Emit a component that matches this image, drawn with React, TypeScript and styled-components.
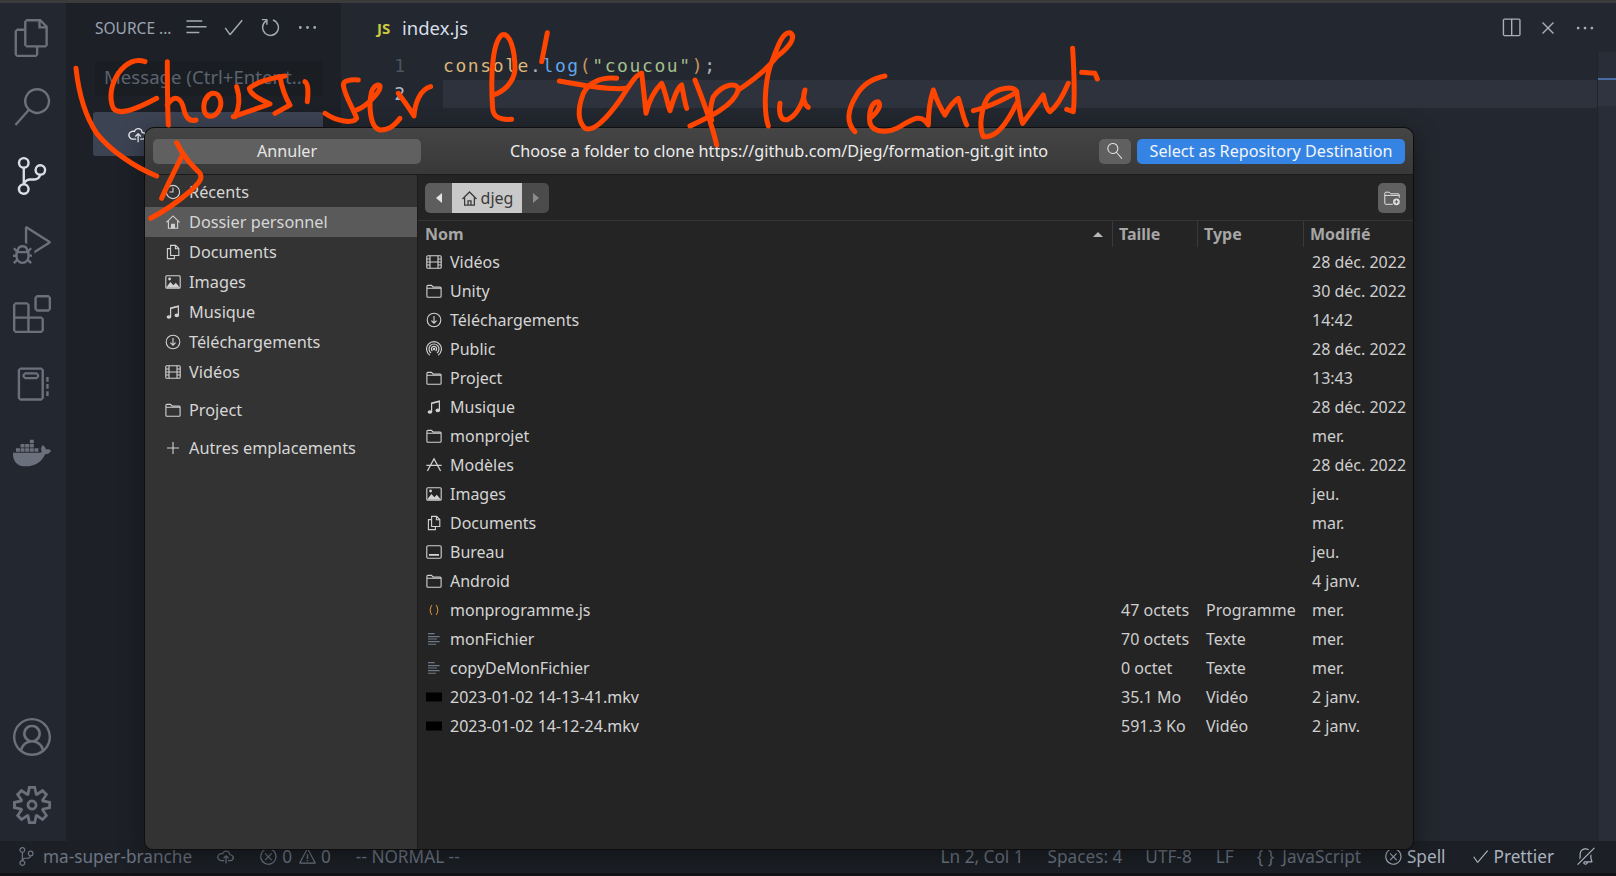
import * as React from 'react';
import styled, { createGlobalStyle } from 'styled-components';
import {
  VscFiles, VscSearch, VscSourceControl, VscDebugAlt, VscExtensions, VscNotebook, VscAccount,
  VscSettingsGear, VscListSelection, VscCheck, VscRefresh, VscEllipsis, VscSplitHorizontal,
  VscClose, VscCloudUpload, VscError, VscWarning, VscBellSlash,
} from 'react-icons/vsc';
import { FaDocker } from 'react-icons/fa';

const GlobalStyle = createGlobalStyle`
  html, body { margin: 0; padding: 0; background: #1c2026; overflow: hidden; }
  body { font-family: "Noto Sans", "Liberation Sans", sans-serif; }
`;

const Page = styled.div`
  position: relative;
  width: 1616px;
  height: 876px;
  display: flex;
  flex-direction: column;
  overflow: hidden;
`;

const TopStrip = styled.div`
  height: 3px;
  background: #3b3b3b;
`;

const Main = styled.div`
  flex: 1;
  display: flex;
  min-height: 0;
`;

const ActivityBar = styled.nav`
  width: 66px;
  box-sizing: border-box;
  padding: 0 3px 2px 0;
  background: #23272f;
  display: flex;
  flex-direction: column;
  justify-content: space-between;
`;

const ActivityGroup = styled.div`
  display: flex;
  flex-direction: column;
`;

const ActivityItem = styled.div<{ $active?: boolean; $h?: number }>`
  height: ${p => p.$h ?? 69.2}px;
  display: flex;
  align-items: center;
  justify-content: center;
  color: ${p => (p.$active ? '#d8dee9' : '#6b717c')};
  font-size: 38px;
`;

const SideBar = styled.aside`
  width: 275px;
  background: #1d2127;
  display: flex;
  flex-direction: column;
`;

const SideHeader = styled.div`
  height: 49px;
  display: flex;
  align-items: center;
  padding-left: 29px;
  color: #9aa3b2;
  font-size: 15.5px;
`;

const SideTitle = styled.span`
  width: 83px;
`;

const SideAction = styled.span`
  width: 37px;
  display: flex;
  justify-content: center;
  font-size: 23px;
  color: #a3aab6;
`;

const MessageBox = styled.div`
  margin: 9px 19px 0 29px;
  height: 35px;
  box-sizing: border-box;
  background: #1a1d22;
  padding: 0 0 4px 9px;
  display: flex;
  align-items: center;
  color: #5c6370;
  font-size: 18.6px;
  white-space: nowrap;
`;

const PublishButton = styled.div`
  margin: 16px 18px 0 27px;
  height: 44px;
  border-radius: 3px;
  background: #3c4353;
  color: #eceff4;
  display: flex;
  align-items: center;
  padding-left: 34px;
  font-size: 21px;
`;

const Editor = styled.main`
  flex: 1;
  background: #23272f;
  display: flex;
  flex-direction: column;
  min-width: 0;
`;

const TabBar = styled.div`
  height: 49px;
  display: flex;
  align-items: center;
  padding: 0 13px 0 36px;
`;

const JsBadge = styled.span`
  color: #cbcb41;
  font-size: 15px;
  font-weight: 700;
  width: 25px;
`;

const TabName = styled.span`
  color: #d8dee9;
  font-size: 18.5px;
  flex: 1;
`;

const TabAction = styled.span`
  width: 37px;
  display: flex;
  justify-content: center;
  color: #a9b0bc;
  font-size: 22px;
`;

const EditorBody = styled.div`
  flex: 1;
  display: flex;
  min-height: 0;
`;

const CodeArea = styled.div`
  flex: 1;
`;

const Line = styled.div`
  height: 28px;
  display: flex;
  align-items: center;
  font-family: "DejaVu Sans Mono", "Liberation Mono", monospace;
  font-size: 18px;
  letter-spacing: 1.6px;
  white-space: pre;
`;

const LineNumber = styled.span<{ $current?: boolean }>`
  width: 64px;
  padding: 0 38px 2px 0;
  text-align: right;
  letter-spacing: 0;
  color: ${p => (p.$current ? '#aeb6c4' : '#4c5361')};
`;

const Content = styled.span<{ $current?: boolean }>`
  flex: 1;
  height: 100%;
  box-sizing: border-box;
  padding-bottom: 2px;
  display: flex;
  align-items: center;
  background: ${p => (p.$current ? '#2d323d' : 'transparent')};
`;

const Tok = styled.span<{ $c: string }>`
  color: ${p => p.$c};
`;

const Minimap = styled.div`
  width: 18px;
  background: #292d37;
  border-left: 1px solid #1f232a;
  display: flex;
  flex-direction: column;
`;

const MinimapBand = styled.div`
  margin-top: 26px;
  height: 28px;
  background: #2f3440;
  border-top: 2px solid #4a6ba3;
  box-sizing: border-box;
`;

const StatusBar = styled.footer`
  height: 32px;
  box-sizing: border-box;
  padding: 0 21px 2px 17px;
  background: #1c2026;
  display: flex;
  align-items: center;
  color: #6c7583;
  font-size: 17.2px;
  white-space: nowrap;
`;

const BottomLine = styled.div`
  height: 3px;
  background: #111317;
`;

const StatusItem = styled.span<{ $gap?: number; $bright?: boolean; $iconGap?: number }>`
  display: inline-flex;
  align-items: center;
  gap: ${p => p.$iconGap ?? 4}px;
  margin-left: ${p => p.$gap ?? 0}px;
  color: ${p => (p.$bright ? '#aab2bf' : 'inherit')};
  svg { font-size: 19px; }
`;

const StatusSpacer = styled.span`
  flex: 1;
`;

/* file chooser */
const Dialog = styled.section`
  position: absolute;
  left: 145px;
  top: 128px;
  width: 1268px;
  height: 721px;
  display: flex;
  flex-direction: column;
  border-radius: 9px 9px 8px 8px;
  overflow: hidden;
  background: #242424;
  box-shadow: 0 0 0 1px #0e0e0e, 0 6px 26px rgba(0, 0, 0, 0.45);
  color: #d4d4d4;
  font-size: 16px;
`;

const DialogHeader = styled.header`
  height: 46px;
  flex-shrink: 0;
  display: grid;
  grid-template-columns: 1fr auto 1fr;
  align-items: center;
  padding: 0 8px;
  background: linear-gradient(#454545, #383838);
  border-bottom: 1px solid #1b1b1b;
`;

const HeaderButton = styled.button<{ $w?: number; $primary?: boolean }>`
  height: 25px;
  width: ${p => (p.$w ? `${p.$w}px` : 'auto')};
  border: none;
  border-radius: 5px;
  padding: 0;
  font: inherit;
  font-size: 16.15px;
  color: ${p => (p.$primary ? '#f2f6fb' : '#e6e6e6')};
  background: ${p => (p.$primary ? '#3584e4' : '#606060')};
  display: flex;
  align-items: center;
  justify-content: center;
`;

const SearchGlyph = styled(VscSearch)`
  color: #e6e6e6;
  transform: scaleX(-1);
`;

const DialogTitle = styled.div`
  color: #ececec;
  font-size: 16.2px;
  white-space: nowrap;
`;

const HeaderRight = styled.div`
  justify-self: end;
  display: flex;
  gap: 6px;
`;

const DialogBody = styled.div`
  flex: 1;
  display: flex;
  min-height: 0;
`;

const Places = styled.div`
  width: 272px;
  flex-shrink: 0;
  background: #333333;
  border-right: 1px solid #1c1c1c;
  padding-top: 2px;
  font-size: 16.3px;
`;

const Place = styled.div<{ $selected?: boolean; $sep?: boolean }>`
  height: 30px;
  margin-top: ${p => (p.$sep ? 8 : 0)}px;
  display: flex;
  align-items: center;
  gap: 8px;
  padding-left: 20px;
  background: ${p => (p.$selected ? '#5a5a5a' : 'transparent')};
  color: #d6d6d6;
`;

const FilePane = styled.div`
  flex: 1;
  min-width: 0;
  display: flex;
  flex-direction: column;
`;

const PathRow = styled.div`
  height: 46px;
  flex-shrink: 0;
  box-sizing: border-box;
  padding: 8px 7px 7px;
  display: flex;
  justify-content: space-between;
  border-bottom: 1px solid #353535;
`;

const PathBar = styled.div`
  display: flex;
  border-radius: 5px;
  overflow: hidden;
`;

const PathArrow = styled.div<{ $dim?: boolean }>`
  width: 27px;
  display: flex;
  align-items: center;
  justify-content: center;
  background: ${p => (p.$dim ? '#4b4b4b' : '#5d5d5d')};
  color: ${p => (p.$dim ? '#8c8c8c' : '#e4e4e4')};
`;

const PathCrumb = styled.div`
  width: 70px;
  display: flex;
  align-items: center;
  justify-content: center;
  gap: 3px;
  background: #c9c9c9;
  color: #3a3a3a;
`;

const NewFolderButton = styled.div`
  width: 28px;
  border-radius: 5px;
  background: #606060;
  display: flex;
  align-items: center;
  justify-content: center;
`;

const FileGrid = styled.div`
  display: grid;
  grid-template-columns: 694px 85px 106px 1fr;
  grid-template-rows: 26px;
  grid-auto-rows: 29px;
  align-items: center;
`;

const ColumnHead = styled.div<{ $first?: boolean }>`
  height: 100%;
  display: flex;
  align-items: center;
  justify-content: space-between;
  box-sizing: border-box;
  padding: 0 7px;
  color: #a6a6a6;
  font-weight: 700;
  ${p => !p.$first && 'box-shadow: inset 1px 0 0 #3a3a3a;'}
`;

const SortArrow = styled.span`
  width: 0;
  height: 0;
  border-left: 5px solid transparent;
  border-right: 5px solid transparent;
  border-bottom: 5px solid #b8b8b8;
  margin-right: 2px;
`;

const NameCell = styled.div`
  display: flex;
  align-items: center;
  gap: 8px;
  padding-left: 8px;
  color: #d4d4d4;
`;

const Cell = styled.div`
  padding-left: 9px;
  color: #cfcfcf;
  white-space: nowrap;
`;

const IconSvg = styled.svg`
  flex-shrink: 0;
`;

const Annotation = styled.svg`
  position: absolute;
  left: 0;
  top: 0;
  pointer-events: none;
`;

type IconName =
  | 'clock' | 'home' | 'docs' | 'image' | 'music' | 'download' | 'film' | 'folder' | 'plus'
  | 'public' | 'templates' | 'desktop' | 'code' | 'text' | 'video';

const GtkIcon = ({ name }: { name: IconName }) => {
  const line = { fill: 'none', stroke: '#d2d2d2', strokeWidth: 1.1 };
  let body: React.ReactNode = null;
  switch (name) {
    case 'clock':
      body = <g {...line}><circle cx="8" cy="8" r="6.6" /><path d="M8 3.6V8H4.4" /></g>;
      break;
    case 'home':
      body = <g {...line}><path d="M1.4 8.4 8 1.9l6.6 6.5M3.4 7v7.3h9.2V7" /><path d="M6.6 14.3v-4h2.8v4" fill="#d2d2d2" /></g>;
      break;
    case 'docs':
      body = <g {...line}><path d="M5.6 4.6H2.4v10h7v-3" /><path d="M5.6 1.4h5l3.2 3.2v6.9H5.6zM10.4 1.4v3.4h3.4" /></g>;
      break;
    case 'image':
      body = (
        <g>
          <rect x="0.8" y="1.8" width="14.4" height="12.4" rx="1" fill="none" stroke="#d2d2d2" strokeWidth="1.1" />
          <path d="M1 13.8 5.4 8l3 3.2 2.4-2.4 4.2 5z" fill="#d2d2d2" />
          <circle cx="4.6" cy="5" r="1.4" fill="#d2d2d2" />
        </g>
      );
      break;
    case 'music':
      body = (
        <g fill="#d2d2d2">
          <path d="M5 3.4 14 1.2v1.9L6.2 5v8H5zM12.8 2h1.2v9.4h-1.2z" />
          <ellipse cx="3.9" cy="13" rx="2.3" ry="1.8" />
          <ellipse cx="11.8" cy="11.4" rx="2.3" ry="1.8" />
        </g>
      );
      break;
    case 'download':
      body = <g {...line}><circle cx="8" cy="8" r="6.8" /><path d="M8 4v7M5.4 8.6 8 11.2l2.6-2.6" /></g>;
      break;
    case 'film':
      body = <g {...line}><rect x="0.8" y="1.8" width="14.4" height="12.4" rx="1" /><path d="M4 1.8v12.4M12 1.8v12.4M4 8h8M.8 5h3.2M.8 8h3.2M.8 11h3.2M12 5h3.2M12 8h3.2M12 11h3.2" /></g>;
      break;
    case 'folder':
      body = <g {...line}><path d="M.9 13.2V3.4c0-.6.4-1 1-1h3.6L7 4h7.1c.6 0 1 .4 1 1v8.2c0 .6-.4 1-1 1H1.9c-.6 0-1-.4-1-1zM.9 5.2h14.2" /></g>;
      break;
    case 'plus':
      body = <path d="M8 2v12M2 8h12" {...line} />;
      break;
    case 'public':
      body = <g {...line} strokeWidth={1.2}><path d="M3.8 14.2a7.4 7.4 0 1 1 8.4 0" /><path d="M5 12a5 5 0 1 1 6 0" /><path d="M6.4 10a2.6 2.6 0 1 1 3.2 0" /><circle cx="8" cy="8" r=".7" /></g>;
      break;
    case 'templates':
      body = <g {...line} strokeWidth={1.3}><path d="M1.4 14 8 1.8 14.6 14M.4 8.4h15.2" /></g>;
      break;
    case 'desktop':
      body = <g><rect x="0.8" y="1.8" width="14.4" height="12.4" rx="1.2" fill="none" stroke="#d2d2d2" strokeWidth="1.1" /><rect x="3" y="10" width="10" height="1.8" fill="#d2d2d2" /></g>;
      break;
    case 'code':
      body = <path d="M6 3C3.6 5.6 3.6 10.4 6 13M10 3c2.4 2.6 2.4 7.4 0 10" fill="none" stroke="#d0883a" strokeWidth="1.1" />;
      break;
    case 'text':
      body = <path d="M2 2.6h6.6M2 5.6h11.6M2 8h9M2 10.6h11.6M2 13.2h8" fill="none" stroke="#6d7988" strokeWidth="1.1" />;
      break;
    case 'video':
      body = <rect x="0" y="3.5" width="16" height="9" fill="#000" />;
      break;
  }
  return <IconSvg width="16" height="16" viewBox="0 0 16 16">{body}</IconSvg>;
};

const GtkHome = () => (
  <svg width="17" height="17" viewBox="0 0 16 16">
    <path d="M1.4 8.4 8 1.9l6.6 6.5M3.4 7v7.3h9.2V7M6.6 14.3v-4h2.8v4" fill="none" stroke="#3a3a3a" strokeWidth="1.2" />
  </svg>
);

const places: { icon: IconName; label: string; selected?: boolean; sep?: boolean }[] = [
  { icon: 'clock', label: 'Récents' },
  { icon: 'home', label: 'Dossier personnel', selected: true },
  { icon: 'docs', label: 'Documents' },
  { icon: 'image', label: 'Images' },
  { icon: 'music', label: 'Musique' },
  { icon: 'download', label: 'Téléchargements' },
  { icon: 'film', label: 'Vidéos' },
  { icon: 'folder', label: 'Project', sep: true },
  { icon: 'plus', label: 'Autres emplacements', sep: true },
];

const files: { icon: IconName; name: string; size?: string; type?: string; date: string }[] = [
  { icon: 'film', name: 'Vidéos', date: '28 déc. 2022' },
  { icon: 'folder', name: 'Unity', date: '30 déc. 2022' },
  { icon: 'download', name: 'Téléchargements', date: '14:42' },
  { icon: 'public', name: 'Public', date: '28 déc. 2022' },
  { icon: 'folder', name: 'Project', date: '13:43' },
  { icon: 'music', name: 'Musique', date: '28 déc. 2022' },
  { icon: 'folder', name: 'monprojet', date: 'mer.' },
  { icon: 'templates', name: 'Modèles', date: '28 déc. 2022' },
  { icon: 'image', name: 'Images', date: 'jeu.' },
  { icon: 'docs', name: 'Documents', date: 'mar.' },
  { icon: 'desktop', name: 'Bureau', date: 'jeu.' },
  { icon: 'folder', name: 'Android', date: '4 janv.' },
  { icon: 'code', name: 'monprogramme.js', size: '47 octets', type: 'Programme', date: 'mer.' },
  { icon: 'text', name: 'monFichier', size: '70 octets', type: 'Texte', date: 'mer.' },
  { icon: 'text', name: 'copyDeMonFichier', size: '0 octet', type: 'Texte', date: 'mer.' },
  { icon: 'video', name: '2023-01-02 14-13-41.mkv', size: '35.1 Mo', type: 'Vidéo', date: '2 janv.' },
  { icon: 'video', name: '2023-01-02 14-12-24.mkv', size: '591.3 Ko', type: 'Vidéo', date: '2 janv.' },
];

// freehand strokes, traced in 3x crop coordinates of each part of the picture
const inkLeft = [
  'M48 55C55 120 70 190 110 250C150 300 220 350 290 378',
  'M255 35C230 25 200 35 175 70C155 100 145 140 160 175C175 195 215 185 290 145',
  'M322 35C322 100 322 160 325 225',
  'M322 165C345 130 365 145 372 180C378 205 390 215 408 210',
  'M455 130C430 140 425 180 440 195C465 210 490 175 480 145C472 125 450 125 440 145',
  'M530 110C540 140 540 170 525 200',
  'M675 78C630 85 590 95 568 115C570 135 605 150 630 162L520 200',
  'M660 80C665 110 675 140 690 165L645 190',
  'M735 95C745 100 745 130 742 155',
  'M895 90C870 88 850 92 850 105C855 140 880 175 890 205C880 222 830 215 795 190',
  'M890 180C920 170 955 130 960 115C965 100 945 100 935 125C925 165 930 235 960 240C985 240 1000 230 1020 205',
  'M1015 130C1030 150 1045 170 1062 198C1065 160 1080 118 1112 110',
  'M350 278C370 320 395 345 420 370C430 385 415 400 395 420C360 450 320 480 272 505',
  'M365 320C345 360 320 410 305 445',
];
const inkMiddle = [
  'M155 298C125 300 100 295 98 265C92 180 95 70 125 45C150 35 165 90 165 150C160 190 130 215 100 225',
  'M262 38L245 125',
  'M298 183C360 195 450 210 500 205',
  'M470 175C420 170 385 190 370 220C355 260 350 300 375 325C395 335 430 310 480 240C510 195 525 165 545 160',
  'M545 160C550 200 555 250 558 280C570 230 590 205 605 190C615 210 622 250 630 272C640 240 650 205 665 195C670 220 675 250 680 265',
  'M705 180C725 230 755 310 770 375',
  'M690 318C740 295 820 260 835 210C835 185 790 190 760 230C750 260 750 285 755 300',
  'M835 210C880 180 920 150 950 110C990 80 1010 50 990 38C965 35 950 90 930 140C915 190 910 270 925 318',
  'M960 250C955 285 965 305 985 298C1010 285 1030 250 1035 210C1028 230 1030 250 1045 262',
];
const inkRight = [
  'M255 168C220 175 190 190 170 225C145 265 135 305 165 335',
  'M210 295C235 275 245 255 235 245C215 245 205 275 210 310C220 340 265 340 300 320C340 295 365 280 385 315C385 280 390 240 400 210C410 240 425 270 435 285C445 265 460 245 475 235C485 265 490 295 500 315',
  'M520 272C570 260 640 225 650 215C640 195 590 205 565 230C545 260 535 320 550 350C590 355 620 310 650 250',
  'M650 215C655 250 660 290 668 310C690 280 720 240 730 225C735 250 740 270 750 275C770 260 790 225 805 190',
  'M818 85C822 150 825 230 820 275L800 268',
  'M845 157L885 160L892 177',
];

const InkGroup = ({ x, y, strokes }: { x: number; y: number; strokes: string[] }) => (
  <g transform={`translate(${x} ${y}) scale(0.3333)`}>
    {strokes.map(d => <path key={d} d={d} />)}
  </g>
);

export default function App() {
  return (
    <Page>
      <GlobalStyle />
      <TopStrip />
      <Main>
        <ActivityBar>
          <ActivityGroup>
            <ActivityItem><VscFiles /></ActivityItem>
            <ActivityItem><VscSearch /></ActivityItem>
            <ActivityItem $active><VscSourceControl /></ActivityItem>
            <ActivityItem><VscDebugAlt /></ActivityItem>
            <ActivityItem><VscExtensions /></ActivityItem>
            <ActivityItem><VscNotebook /></ActivityItem>
            <ActivityItem><FaDocker /></ActivityItem>
          </ActivityGroup>
          <ActivityGroup>
            <ActivityItem $h={68}><VscAccount /></ActivityItem>
            <ActivityItem $h={68}><VscSettingsGear /></ActivityItem>
          </ActivityGroup>
        </ActivityBar>
        <SideBar>
          <SideHeader>
            <SideTitle>SOURCE ...</SideTitle>
            <SideAction><VscListSelection /></SideAction>
            <SideAction><VscCheck /></SideAction>
            <SideAction><VscRefresh /></SideAction>
            <SideAction><VscEllipsis /></SideAction>
          </SideHeader>
          <MessageBox>Message (Ctrl+Enter t...</MessageBox>
          <PublishButton><VscCloudUpload /></PublishButton>
        </SideBar>
        <Editor>
          <TabBar>
            <JsBadge>JS</JsBadge>
            <TabName>index.js</TabName>
            <TabAction><VscSplitHorizontal /></TabAction>
            <TabAction><VscClose /></TabAction>
            <TabAction><VscEllipsis /></TabAction>
          </TabBar>
          <EditorBody>
            <CodeArea>
              <Line>
                <LineNumber>1</LineNumber>
                <Content>
                  <Tok $c="#dcb67a">console</Tok>
                  <Tok $c="#abb2bf">.</Tok>
                  <Tok $c="#61a6e8">log</Tok>
                  <Tok $c="#c9935f">(</Tok>
                  <Tok $c="#a3be8c">"coucou"</Tok>
                  <Tok $c="#c9935f">)</Tok>
                  <Tok $c="#abb2bf">;</Tok>
                </Content>
              </Line>
              <Line>
                <LineNumber $current>2</LineNumber>
                <Content $current />
              </Line>
            </CodeArea>
            <Minimap><MinimapBand /></Minimap>
          </EditorBody>
        </Editor>
      </Main>
      <StatusBar>
        <StatusItem $iconGap={7}><VscSourceControl />ma-super-branche</StatusItem>
        <StatusItem $gap={24}><VscCloudUpload /></StatusItem>
        <StatusItem $gap={24}><VscError />0</StatusItem>
        <StatusItem $gap={6}><VscWarning />0</StatusItem>
        <StatusItem $gap={25}>-- NORMAL --</StatusItem>
        <StatusSpacer />
        <StatusItem>Ln 2, Col 1</StatusItem>
        <StatusItem $gap={24}>Spaces: 4</StatusItem>
        <StatusItem $gap={23}>UTF-8</StatusItem>
        <StatusItem $gap={24}>LF</StatusItem>
        <StatusItem $gap={23}>{'{ }'}</StatusItem>
        <StatusItem $gap={8}>JavaScript</StatusItem>
        <StatusItem $gap={23} $bright><VscError />Spell</StatusItem>
        <StatusItem $gap={25} $bright><VscCheck />Prettier</StatusItem>
        <StatusItem $gap={22} $bright><VscBellSlash /></StatusItem>
      </StatusBar>
      <BottomLine />

      <Dialog>
        <DialogHeader>
          <HeaderButton $w={268}>Annuler</HeaderButton>
          <DialogTitle>Choose a folder to clone https://github.com/Djeg/formation-git.git into</DialogTitle>
          <HeaderRight>
            <HeaderButton $w={32}><SearchGlyph size={16} /></HeaderButton>
            <HeaderButton $w={268} $primary>Select as Repository Destination</HeaderButton>
          </HeaderRight>
        </DialogHeader>
        <DialogBody>
          <Places>
            {places.map(p => (
              <Place key={p.label} $selected={p.selected} $sep={p.sep}>
                <GtkIcon name={p.icon} />
                {p.label}
              </Place>
            ))}
          </Places>
          <FilePane>
            <PathRow>
              <PathBar>
                <PathArrow>
                  <svg width="8" height="10" viewBox="0 0 8 10"><path d="M7 0v10L1 5z" fill="currentColor" /></svg>
                </PathArrow>
                <PathCrumb><GtkHome />djeg</PathCrumb>
                <PathArrow $dim>
                  <svg width="8" height="10" viewBox="0 0 8 10"><path d="M1 0v10l6-5z" fill="currentColor" /></svg>
                </PathArrow>
              </PathBar>
              <NewFolderButton>
                <svg width="16" height="16" viewBox="0 0 16 16">
                  <path d="M.8 13.4V3.2c0-.6.4-1 1-1h3.4L6.8 3.8h7.4c.6 0 1 .4 1 1v3M.8 5.4h14.4M.8 13.4c0 .5.4.9 1 .9h7" fill="none" stroke="#e2e2e2" strokeWidth="1" />
                  <circle cx="12.4" cy="11.8" r="3.4" fill="#e2e2e2" />
                  <path d="M12.4 9.9v3.8M10.5 11.8h3.8" stroke="#606060" strokeWidth="1" />
                </svg>
              </NewFolderButton>
            </PathRow>
            <FileGrid>
              <ColumnHead $first>Nom<SortArrow /></ColumnHead>
              <ColumnHead>Taille</ColumnHead>
              <ColumnHead>Type</ColumnHead>
              <ColumnHead>Modifié</ColumnHead>
              {files.map(f => (
                <React.Fragment key={f.name}>
                  <NameCell><GtkIcon name={f.icon} />{f.name}</NameCell>
                  <Cell>{f.size}</Cell>
                  <Cell>{f.type}</Cell>
                  <Cell>{f.date}</Cell>
                </React.Fragment>
              ))}
            </FileGrid>
          </FilePane>
        </DialogBody>
      </Dialog>

      <Annotation width="1616" height="876" fill="none" stroke="#ff4500" strokeWidth="15" strokeLinecap="round" strokeLinejoin="round">
        <InkGroup x={60} y={50} strokes={inkLeft} />
        <InkGroup x={460} y={20} strokes={inkMiddle} />
        <InkGroup x={800} y={20} strokes={inkRight} />
      </Annotation>
    </Page>
  );
}
